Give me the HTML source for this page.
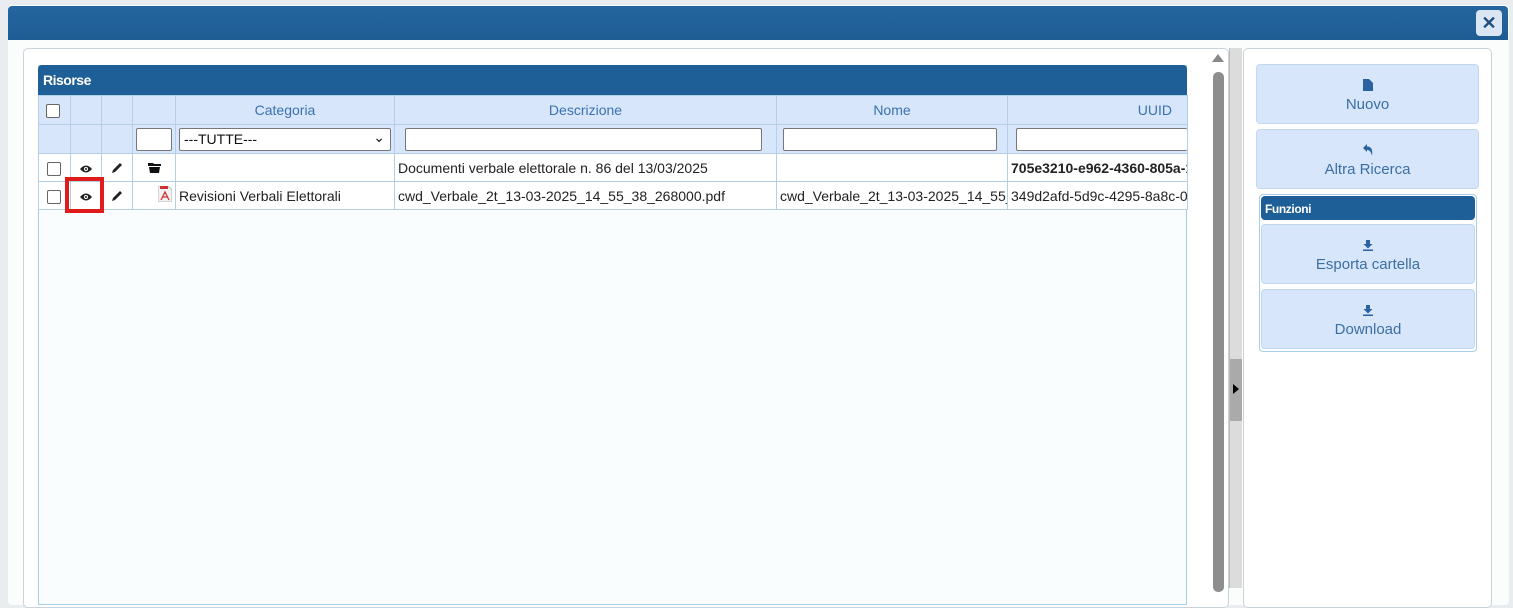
<!DOCTYPE html>
<html><head><meta charset="utf-8"><style>
*{box-sizing:border-box;margin:0;padding:0}
body{width:1513px;height:587px;overflow:hidden;background:#e9edf0;font-family:"Liberation Sans",sans-serif;position:relative}
.a{position:absolute}
.dlg{left:8px;top:5px;width:1501px;height:600px;background:#fbfdfd;border-radius:4px}
.title{left:8px;top:6px;width:1500px;height:34px;background:linear-gradient(#2566a0,#1e5c93);border-radius:4px 4px 0 0}
.close{left:1476px;top:10px;width:26px;height:26px;background:#dbe6f5;border-radius:4px;color:#1e4f80;font-weight:bold;font-size:18px;text-align:center;line-height:26px}
.lp{left:23px;top:48px;width:1206px;height:560px;border:1px solid #c9d3db;border-radius:5px;background:#fff}
.grid{left:38px;top:65px;width:1149px;height:540px;border:1px solid #a8cde6;background:#fafdfd}
.ghead{left:38px;top:65px;width:1149px;height:30px;background:#1f5f97;border-radius:4px 4px 0 0;color:#fff;font-weight:bold;font-size:14px;padding:7px 5px;letter-spacing:-.5px}
table{position:absolute;left:38px;top:95px;border-collapse:collapse;table-layout:fixed;width:1149px;font-size:14px}
td{border:1px solid #b5d0e6;height:29px;overflow:hidden;white-space:nowrap;padding:0 3px}
tr.h td{background:#d7e6fb;color:#3a72ad;text-align:center;height:29px}
tr.f td{background:#d7e6fb}
tr.r td{background:#fff;height:28px;color:#222}
.cb{display:inline-block;width:14px;height:14px;border:1px solid #666;border-radius:2px;background:#fff;vertical-align:middle;margin-left:5px}
.in{display:block;height:23px;border:1px solid #777;border-radius:2px;background:#fff}
.btn{background:#d7e6fb;border:1px solid #c2d8ef;border-radius:4px;color:#3b6fa3;font-size:15px;text-align:center}
.ico{display:block;margin:14px auto 5px;height:12px}
</style></head><body>
<div class="a dlg"></div>
<div class="a title"></div>
<div class="a close">✕</div>
<div class="a lp"></div>
<div class="a grid"></div>
<div class="a ghead">Risorse</div>
<table>
<colgroup><col style="width:32px"><col style="width:31px"><col style="width:31px"><col style="width:43px"><col style="width:219px"><col style="width:382px"><col style="width:231px"><col style="width:180px"></colgroup>
<tr class="h"><td style="text-align:left"><span class="cb" style="margin-left:4px"></span></td><td></td><td></td><td></td><td>Categoria</td><td>Descrizione</td><td>Nome</td><td style="text-align:right;padding-right:15px">UUID</td></tr>
<tr class="f"><td></td><td></td><td></td><td><span class="in" style="width:36px"></span></td><td><span class="in" style="color:#111;font-size:14px;padding:2px 4px;position:relative">---TUTTE---<span style="position:absolute;right:5px;top:0">⌄</span></span></td><td style="padding-left:10px;padding-right:14px"><span class="in"></span></td><td style="padding-left:6px;padding-right:10px"><span class="in"></span></td><td style="padding-left:8px;padding-right:0"><span class="in" style="border-right:none"></span></td></tr>
<tr class="r"><td><span class="cb"></span></td><td style="text-align:center"><svg width="12" height="8" viewBox="0 0 12 8"><path d="M0 4Q6 -3 12 4Q6 11 0 4Z" fill="#222"/><circle cx="6" cy="4" r="2" fill="#fff"/><circle cx="6" cy="4" r="1" fill="#222"/></svg></td><td style="text-align:center"><svg width="11" height="11" viewBox="0 0 11 11"><path d="M0 11L1 8L8 1L10 3L3 10Z" fill="#222"/></svg></td><td style="text-align:center"><svg width="13" height="10" viewBox="0 0 13 10"><path d="M0 0H5L6 1H13V3H0Z M1 4H12L11 10H2Z" fill="#111"/></svg></td><td></td><td>Documenti verbale elettorale n. 86 del 13/03/2025</td><td></td><td style="font-weight:bold">705e3210-e962-4360-805a-1</td></tr>
<tr class="r"><td><span class="cb"></span></td><td style="text-align:center"><svg width="12" height="8" viewBox="0 0 12 8"><path d="M0 4Q6 -3 12 4Q6 11 0 4Z" fill="#222"/><circle cx="6" cy="4" r="2" fill="#fff"/><circle cx="6" cy="4" r="1" fill="#222"/></svg></td><td style="text-align:center"><svg width="11" height="11" viewBox="0 0 11 11"><path d="M0 11L1 8L8 1L10 3L3 10Z" fill="#222"/></svg></td><td style="text-align:right"><svg width="14" height="16" viewBox="0 0 14 16"><path d="M0 0H10L14 4V16H0Z" fill="#f2f2f2" stroke="#bbb"/><path d="M2 0H10V3H2Z" fill="#c33"/><path d="M3 14L7 6L11 14M5 11H10" stroke="#c33" fill="none" stroke-width="1.3"/></svg></td><td>Revisioni Verbali Elettorali</td><td>cwd_Verbale_2t_13-03-2025_14_55_38_268000.pdf</td><td>cwd_Verbale_2t_13-03-2025_14_55_</td><td>349d2afd-5d9c-4295-8a8c-0</td></tr>
</table>
<div class="a" style="left:65px;top:177px;width:39px;height:36px;border:4px solid #e01b1b"></div>
<div class="a" style="left:1213px;top:72px;width:11px;height:520px;background:#8e8e8e;border-radius:5px"></div>
<div class="a" style="left:1212px;top:54px;width:0;height:0;border-left:6px solid transparent;border-right:6px solid transparent;border-bottom:8px solid #888"></div>
<div class="a" style="left:1229px;top:48px;width:13px;height:540px;background:#dcdcdc;border-left:1px solid #bbb"></div>
<div class="a" style="left:1230px;top:359px;width:12px;height:62px;background:#aaa"></div>
<div class="a" style="left:1233px;top:384px;border-top:5px solid transparent;border-bottom:5px solid transparent;border-left:6px solid #000"></div>
<div class="a" style="left:1243px;top:48px;width:249px;height:560px;border:1px solid #c9d3db;border-radius:5px;background:#fff"></div>
<div class="a btn" style="left:1256px;top:64px;width:223px;height:60px"><svg class="ico" width="10" height="12" viewBox="0 0 10 12"><path d="M0 0H6L10 4V12H0Z" fill="#2a63a0"/></svg>Nuovo</div>
<div class="a btn" style="left:1256px;top:129px;width:223px;height:60px"><svg class="ico" width="10" height="12" viewBox="0 0 10 12"><path d="M0 4L4 0V2.5C8 2.5 10 5 9 12C8 7 6 6 4 6V8Z" fill="#2a63a0"/></svg>Altra Ricerca</div>
<div class="a" style="left:1259px;top:194px;width:218px;height:158px;border:1px solid #a8cde6;border-radius:4px;background:#fff"></div>
<div class="a" style="left:1261px;top:196px;width:214px;height:24px;background:#1f5f97;border-radius:4px;color:#fff;font-weight:bold;font-size:12px;padding:6px 4px;letter-spacing:-.4px">Funzioni</div>
<div class="a btn" style="left:1261px;top:224px;width:214px;height:60px"><svg class="ico" width="10" height="12" viewBox="0 0 10 12"><path d="M3 1H7V5H9.5L5 9.5L0.5 5H3Z M0 10.5H10V12H0Z" fill="#2a63a0"/></svg>Esporta cartella</div>
<div class="a btn" style="left:1261px;top:289px;width:214px;height:60px"><svg class="ico" width="10" height="12" viewBox="0 0 10 12"><path d="M3 1H7V5H9.5L5 9.5L0.5 5H3Z M0 10.5H10V12H0Z" fill="#2a63a0"/></svg>Download</div>
</body></html>
